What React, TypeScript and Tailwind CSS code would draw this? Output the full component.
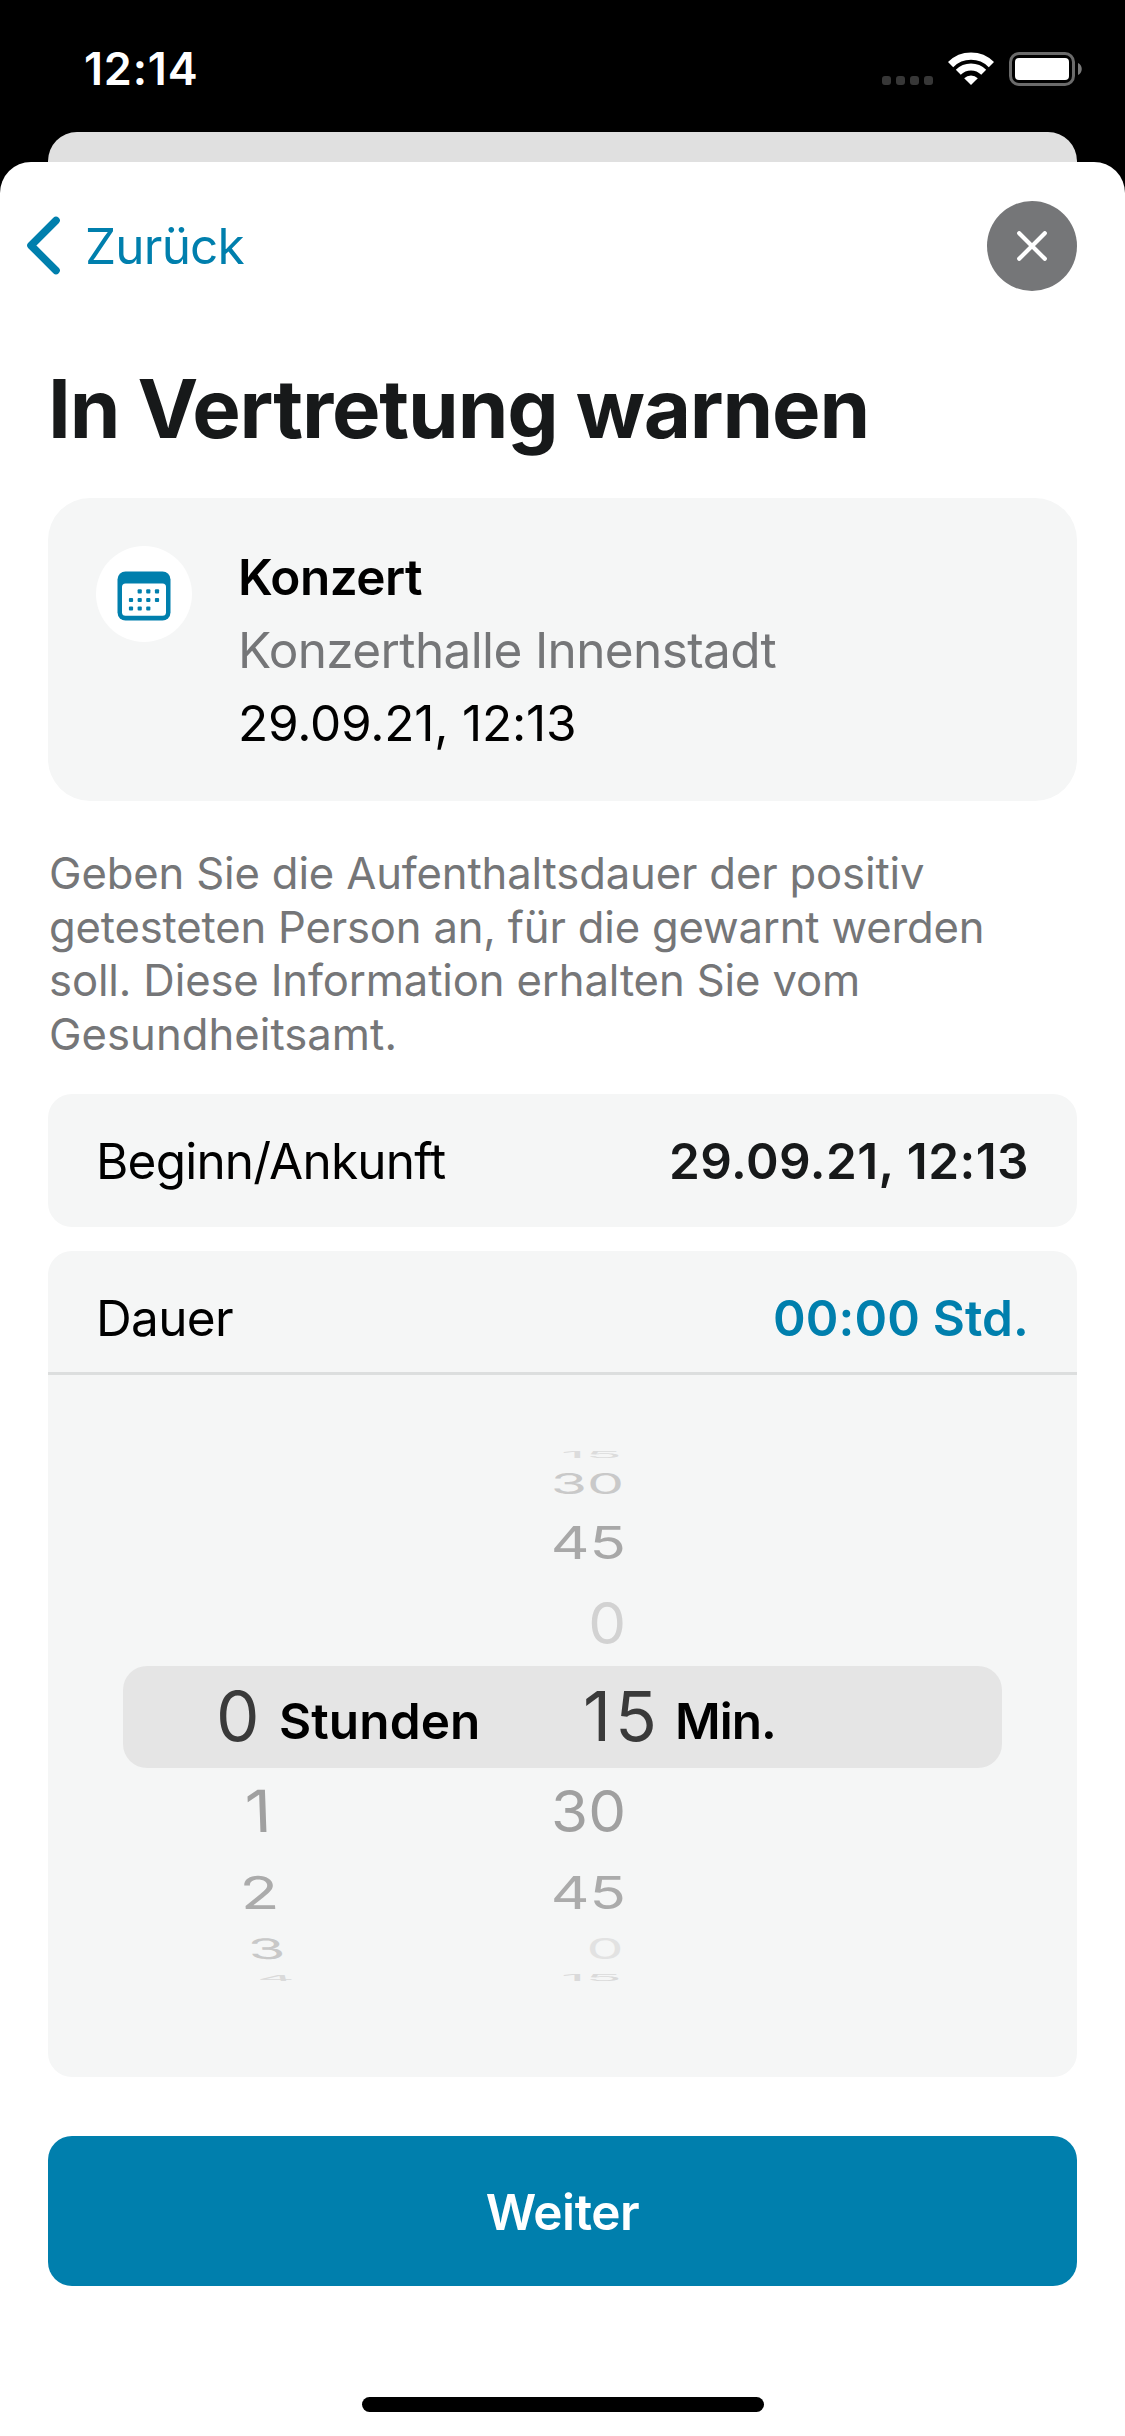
type WheelRow = { value: string; row: string; glyph: string };

const hoursBelow: WheelRow[] = [
  { value: "1", row: "h-[82px] pl-[198px] text-[#a0a0a0]", glyph: "[transform:skewX(2deg)_scale(1.08,0.97)]" },
  { value: "2", row: "h-[79px] pl-[193px] text-[#ababab]", glyph: "[transform:skewX(4deg)_scale(1.06,0.75)]" },
  { value: "3", row: "h-[36px] pl-[200px] text-[#c8c8c8]", glyph: "[transform:skewX(7deg)_scale(1,0.47)]" },
  { value: "4", row: "h-[22px] pl-[208px] text-[#dadada]", glyph: "[transform:skewX(14deg)_scale(0.98,0.14)]" },
];

const minutesAbove: WheelRow[] = [
  { value: "15", row: "h-[20px] pr-[455px] text-[#dcdcdc]", glyph: "[transform:scale(1,0.14)]" },
  { value: "30", row: "h-[37px] pr-[452px] text-[#c9c9c9]", glyph: "[transform:scale(0.98,0.47)]" },
  { value: "45", row: "h-[79px] pr-[451px] text-[#a8a8a8]", glyph: "[transform:scale(1,0.76)]" },
  { value: "0", row: "h-[83px] pr-[451px] text-[#d2d2d2]", glyph: "[transform:scale(1,0.97)]" },
];

const minutesBelow: WheelRow[] = [
  { value: "30", row: "h-[82px] pr-[451px] text-[#a0a0a0]", glyph: "[transform:scale(1,0.97)]" },
  { value: "45", row: "h-[79px] pr-[451px] text-[#ababab]", glyph: "[transform:scale(1,0.75)]" },
  { value: "0", row: "h-[36px] pr-[453px] text-[#e2e2e2]", glyph: "[transform:scale(0.98,0.47)]" },
  { value: "15", row: "h-[22px] pr-[455px] text-[#dadada]", glyph: "[transform:scale(1,0.14)]" },
];

const calendarDots = [
  [43.7, 45.4], [52.3, 45.4], [61, 45.4],
  [35, 54], [43.7, 54], [52.3, 54], [61, 54],
  [35, 62.5], [43.7, 62.5], [52.3, 62.5],
];

function WheelColumn({ rows, align }: { rows: WheelRow[]; align: string }) {
  return (
    <div className={`col-start-1 row-start-1 flex flex-col text-[60px] ${align}`}>
      {rows.map((r, i) => (
        <div key={i} className={`flex items-center leading-none ${r.row}`}>
          <span className={`block ${r.glyph}`}>{r.value}</span>
        </div>
      ))}
    </div>
  );
}

function StatusBar() {
  return (
    <div className="flex h-[132px] items-start justify-between pl-[84px] pr-[43px] text-white">
      <div className="mt-[38px] text-[45px] leading-[61px] font-semibold tracking-[0.8px]">12:14</div>
      <div className="mt-[52px] flex items-start">
        <div className="mt-[24px] flex gap-[5px]">
          <span className="size-[9px] rounded-[3px] bg-[#373737]" />
          <span className="size-[9px] rounded-[3px] bg-[#373737]" />
          <span className="size-[9px] rounded-[3px] bg-[#373737]" />
          <span className="size-[9px] rounded-[3px] bg-[#373737]" />
        </div>
        <svg className="ml-[15px]" width="46" height="33" viewBox="0 0 46 33" fill="none">
          <path d="M2.6 12.6A28.9 28.9 0 0 1 43.4 12.6" stroke="white" strokeWidth="7.4" />
          <path d="M10.3 20.3A18 18 0 0 1 35.7 20.3" stroke="white" strokeWidth="7" />
          <path d="M16.2 26.2A9.8 9.8 0 0 1 29.8 26.2L23 33Z" fill="white" />
        </svg>
        <svg className="ml-[15px]" width="73" height="34" viewBox="0 0 73 34" fill="none">
          <rect x="1.5" y="1.5" width="63" height="31" rx="8.5" stroke="#6b6b6b" strokeWidth="3" />
          <rect x="6" y="6" width="54" height="22" rx="4" fill="white" />
          <path d="M69 11C74 13 74 21 69 23Z" fill="#7a7a7a" />
        </svg>
      </div>
    </div>
  );
}

export default function App() {
  return (
    <div className="flex h-[2436px] w-[1125px] flex-col overflow-hidden bg-black font-[Inter,sans-serif] text-[49.5px] text-black">
      <StatusBar />
      <div className="mx-12 h-[30px] rounded-t-[29px] bg-[#e0e0e0]" />
      <div className="flex flex-1 flex-col rounded-t-[31px] bg-white px-12">
        <div className="-ml-6 mt-[39px] flex h-[90px] items-center text-[#007fad]">
          <svg width="40" height="66" viewBox="0 0 40 66" fill="none">
            <path d="M32 7.5L7 32.5L32 57.5" stroke="currentColor" strokeWidth="7.6" strokeLinecap="round" strokeLinejoin="round" />
          </svg>
          <span className="ml-[21px] flex-1 tracking-[-0.8px]">Zurück</span>
          <button className="flex size-[90px] items-center justify-center rounded-full bg-[#757678]">
            <svg width="30" height="30" viewBox="0 0 30 30" fill="none">
              <path d="M2.2 2.2L27.8 27.8M27.8 2.2L2.2 27.8" stroke="white" strokeWidth="4.2" strokeLinecap="round" />
            </svg>
          </button>
        </div>

        <h1 className="mt-[69px] text-[81.5px] leading-[98px] font-bold tracking-[-1.15px] text-[#17191a]">
          In Vertretung warnen
        </h1>

        <div className="mt-10 flex h-[303px] items-start rounded-[42px] bg-[#f5f6f6] pl-12">
          <div className="mt-12 size-24 rounded-full bg-white">
            <svg width="96" height="96" viewBox="0 0 96 96">
              <rect x="21.5" y="25.5" width="53" height="49" rx="8" fill="#007fad" />
              <rect x="26" y="37.6" width="44" height="32.2" rx="3.5" fill="white" />
              {calendarDots.map(([x, y]) => (
                <rect key={`${x}-${y}`} x={x - 2.1} y={y - 2.1} width="4.2" height="4.2" rx="1" fill="#007fad" />
              ))}
            </svg>
          </div>
          <div className="ml-[46px] mt-[43px] leading-[73px]">
            <div className="font-semibold tracking-[-0.53px]">Konzert</div>
            <div className="tracking-[-0.63px] text-[#757678]">Konzerthalle Innenstadt</div>
            <div className="tracking-[-0.2px]">29.09.21, 12:13</div>
          </div>
        </div>

        <p className="mt-[46px] h-[247px] pl-px text-[43.6px] leading-[53.7px] whitespace-nowrap text-[#757678]">
          <span className="block tracking-[-0.14px]">Geben Sie die Aufenthaltsdauer der positiv</span>
          <span className="block tracking-[-0.17px]">getesteten Person an, für die gewarnt werden</span>
          <span className="block tracking-[-0.12px]">soll. Diese Information erhalten Sie vom</span>
          <span className="block tracking-[0.05px]">Gesundheitsamt.</span>
        </p>

        <div className="flex h-[133px] items-center justify-between rounded-[24px] bg-[#f5f6f6] px-12 pt-px">
          <span className="tracking-[-0.8px]">Beginn/Ankunft</span>
          <span className="font-semibold tracking-[0.45px] text-[#17191a]">29.09.21, 12:13</span>
        </div>

        <div className="mt-6 flex h-[826px] flex-col rounded-[24px] bg-[#f5f6f6]">
          <div className="flex h-[124px] items-center justify-between border-b-3 border-[#dcdede] px-12 pt-[13px]">
            <span className="tracking-[-0.66px]">Dauer</span>
            <span className="font-semibold tracking-[0.12px] text-[#007fad]">00:00 Std.</span>
          </div>
          <div className="grid h-[291px] pt-[70px]">
            <WheelColumn rows={minutesAbove} align="items-end" />
          </div>
          <div className="ml-[75px] flex h-[102px] w-[879px] items-center rounded-[24px] bg-[#e5e5e5] pl-[93px]">
            <span className="-mt-px w-[63px] text-[69px] leading-none text-[#3a3a3a]">0</span>
            <span className="mt-2 w-[304px] font-semibold tracking-[0.1px]">Stunden</span>
            <span className="-mt-px w-[92px] text-[69px] leading-none tracking-[4px] text-[#3a3a3a]">15</span>
            <span className="mt-2 font-semibold tracking-[-0.97px]">Min.</span>
          </div>
          <div className="grid pt-[2px]">
            <WheelColumn rows={hoursBelow} align="items-start" />
            <WheelColumn rows={minutesBelow} align="items-end" />
          </div>
        </div>

        <button className="mt-[59px] flex h-[150px] items-center justify-center rounded-[24px] bg-[#007fad] pt-[2px] font-semibold tracking-[-0.4px] text-white">
          Weiter
        </button>

        <div className="mt-[111px] h-[15px] w-[402px] self-center rounded-full bg-black" />
      </div>
    </div>
  );
}
